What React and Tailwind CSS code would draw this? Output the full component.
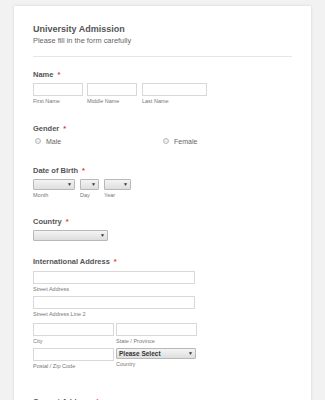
export default function App() {
  const Req = () => <span className="text-[#e33] ml-[4px]">*</span>;
  const Label = ({ children, className = '' }) => (
    <div className={`text-[7.5px] font-bold text-[#555] leading-none ${className}`}>
      {children}
      <Req />
    </div>
  );
  const Sub = ({ children }) => <div className="text-[5.5px] text-[#777] leading-none mt-[3px]">{children}</div>;
  const Input = ({ w }) => <div className={`h-[13px] border border-[#d8d8d8] bg-white ${w}`} />;
  const Select = ({ w, text }) => (
    <div className={`h-[11px] border border-[#b8b8b8] rounded-[1px] bg-gradient-to-b from-[#f4f4f4] to-[#dedede] flex items-center justify-between px-[2px] ${w}`}>
      <span className="text-[6.5px] font-bold text-[#333] leading-none">{text}</span>
      <span className="text-[5px] text-[#333] leading-none">▼</span>
    </div>
  );
  const Radio = () => <span className="inline-block w-[6px] h-[6px] rounded-full border border-[#bbb] bg-[#eee]" />;

  return (
    <div className="w-[325px] h-[400px] overflow-hidden bg-[#f2f2f2] pt-[6px] pl-[14px]" style={{ fontFamily: '"Liberation Sans", Arial, sans-serif' }}>
      <div className="w-[297px] bg-white shadow-[0_0_3px_rgba(0,0,0,0.12)] pt-[19px] px-[19px] pb-[40px]">
        <div className="text-[9px] font-bold text-[#555] leading-none">University Admission</div>
        <div className="text-[7.4px] text-[#666] leading-none mt-[3px]">Please fill in the form carefully</div>
        <div className="h-px bg-[#e6e6e6] mt-[12px] w-[259px]" />

        <Label className="mt-[14px]">Name</Label>
        <div className="flex gap-[4px] mt-[4px]">
          <div><Input w="w-[50px]" /><Sub>First Name</Sub></div>
          <div><Input w="w-[50px]" /><Sub>Middle Name</Sub></div>
          <div className="ml-[1px]"><Input w="w-[65px]" /><Sub>Last Name</Sub></div>
        </div>

        <Label className="mt-[21px]">Gender</Label>
        <div className="flex mt-[5px] text-[7px] text-[#666] leading-none">
          <div className="w-[130px] flex items-center gap-[5px] pl-[2px]"><Radio />Male</div>
          <div className="flex items-center gap-[5px]"><Radio />Female</div>
        </div>

        <Label className="mt-[22px]">Date of Birth</Label>
        <div className="flex gap-[5px] mt-[5px]">
          <div><Select w="w-[42px]" /><Sub>Month</Sub></div>
          <div><Select w="w-[19px]" /><Sub>Day</Sub></div>
          <div><Select w="w-[27px]" /><Sub>Year</Sub></div>
        </div>

        <Label className="mt-[19px]">Country</Label>
        <div className="mt-[5px]"><Select w="w-[75px]" /></div>

        <Label className="mt-[17px]">International Address</Label>
        <div className="mt-[5px] flex flex-col">
          <Input w="w-[162px]" /><Sub>Street Address</Sub>
          <div className="mt-[4px]"><Input w="w-[162px]" /><Sub>Street Address Line 2</Sub></div>
          <div className="flex gap-[2px] mt-[5px]">
            <div><Input w="w-[81px]" /><Sub>City</Sub></div>
            <div><Input w="w-[81px]" /><Sub>State / Province</Sub></div>
          </div>
          <div className="flex gap-[2px] mt-[4px]">
            <div><Input w="w-[81px]" /><Sub>Postal / Zip Code</Sub></div>
            <div><Select w="w-[80px]" text="Please Select" /><Sub>Country</Sub></div>
          </div>
        </div>

        <Label className="mt-[28px]">Current Address</Label>
      </div>
    </div>
  );
}
